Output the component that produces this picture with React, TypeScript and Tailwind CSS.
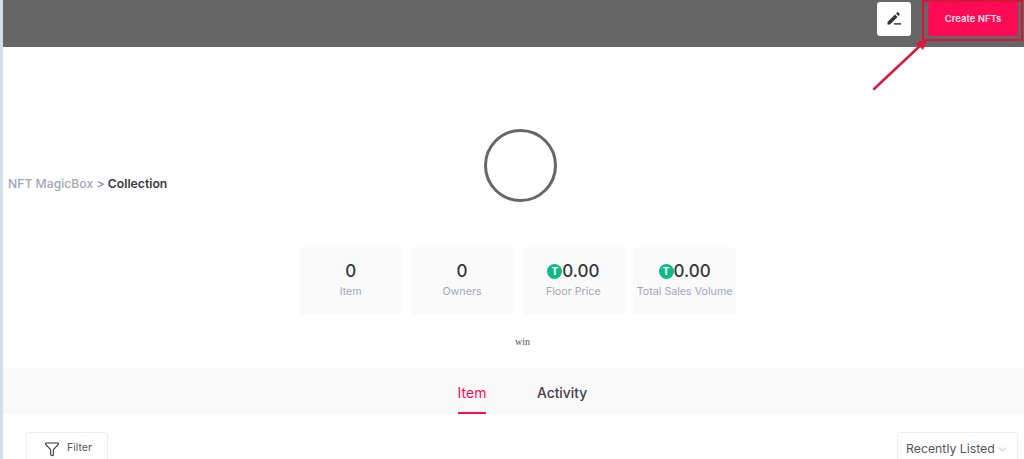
import React from 'react';
import { ChevronDown, Funnel } from 'lucide-react';

const stats = [
  { value: '0', label: 'Item', token: false },
  { value: '0', label: 'Owners', token: false },
  { value: '0.00', label: 'Floor Price', token: true },
  { value: '0.00', label: 'Total Sales Volume', token: true },
];

const TokenIcon = () => (
  <span className="flex h-[15px] w-[15px] items-center justify-center rounded-full bg-[#10b98a] text-[10px] font-bold leading-none text-white">
    T
  </span>
);

const App: React.FC = () => {
  return (
    <div className="relative flex h-[459px] w-[1024px] overflow-hidden bg-white font-['Inter',sans-serif]">
      <div className="w-[3px] shrink-0 bg-[#d5dcea]"></div>

      <div className="flex min-w-0 flex-1 flex-col">
        {/* Header */}
        <header className="flex h-[47px] shrink-0 items-start justify-end gap-[17px] bg-[#666666] pr-[6px] pt-[2px]">
          <button className="flex h-[34px] w-[34px] items-center justify-center rounded-[3px] bg-white">
            <svg width="16" height="16" viewBox="0 0 16 16" fill="#333333">
              <path d="M1.5 11 L9 3.5 L11.5 6 L4 13.5 L1.5 13.5 Z" />
              <path d="M10 2.5 L11 1.5 Q11.8 0.9 12.5 1.5 L13.4 2.4 Q14 3.1 13.4 3.9 L12.5 5 Z" />
              <rect x="8" y="12.2" width="7" height="1.4" />
            </svg>
          </button>
          <button className="flex h-[34px] w-[90px] items-center justify-center rounded-[3px] bg-[#ff0a54] text-[9.5px] font-semibold text-[#ffe3ec]">
            Create NFTs
          </button>
        </header>

        {/* Collection head */}
        <section className="flex pt-[82px]">
          <div className="w-[482px] shrink-0 pl-[5px] pt-[47px] text-[12.2px] font-medium leading-[15px]">
            <span className="text-[#a3a6b4]">NFT MagicBox</span>
            <span className="text-[#8b8e9c]"> &gt; </span>
            <span className="font-semibold text-[#3a3a3f]">Collection</span>
          </div>
          <div className="-ml-[1px] h-[73px] w-[73px] rounded-full border-[3px] border-[#676767] bg-white"></div>
        </section>

        {/* Stats */}
        <section className="ml-[296px] mt-[45px] flex gap-2">
          {stats.map((stat) => (
            <div
              key={stat.label}
              className="flex h-[68px] w-[103.33px] flex-col items-center rounded-[3px] bg-[#fafafa] pt-[14px]"
            >
              <div className="flex items-center text-[17px] font-medium leading-[20px] text-[#36363b]">
                {stat.token && <TokenIcon />}
                <span>{stat.value}</span>
              </div>
              <div className="mt-[4px] whitespace-nowrap text-[10.7px] leading-[14px] text-[#a3a7b5]">{stat.label}</div>
            </div>
          ))}
        </section>

        <div className="ml-[512px] mt-[21px] text-[10px] leading-[12px] text-[#555555] font-['Liberation_Serif',serif]">
          win
        </div>

        {/* Tabs */}
        <nav className="mt-[20px] flex h-[46px] shrink-0 bg-[#f9f9f9] pl-[455px]">
          <div className="flex h-[46px] w-[28px] flex-col items-center border-b-[2px] border-[#ff0a54] pt-[16px] text-[14px] font-normal leading-[18px] text-[#ff0a54]">
            Item
          </div>
          <div className="ml-[51px] pt-[16px] text-[13.8px] font-medium leading-[18px] text-[#3f3f45]">Activity</div>
        </nav>

        {/* Filter row */}
        <div className="flex items-start justify-between pl-[23px] pr-[6px] pt-[18px]">
          <button className="flex h-[31px] w-[82px] items-center rounded-[3px] border border-[#eeeeee] pl-[17px] text-[10.5px] text-[#55555a]">
            <Funnel size={16} strokeWidth={1.6} className="mt-[2px] text-[#333333]" />
            <span className="ml-[7px]">Filter</span>
          </button>
          <button className="flex h-[31px] w-[121px] items-center rounded-[3px] border border-[#eeeeee] pl-[8px] pt-[3px] text-[12.3px] text-[#55555a]">
            <span>Recently Listed</span>
            <ChevronDown size={13} strokeWidth={1.2} className="ml-[1px] text-[#888888]" />
          </button>
        </div>
      </div>

      {/* Red annotation drawn over the screenshot */}
      <div className="absolute left-[922px] top-0 h-[41px] w-[101px] border-[2px] border-[#d3163a]"></div>
      <svg className="absolute left-[870px] top-[36px]" width="62" height="56" viewBox="0 0 62 56" fill="none">
        <path d="M4 53 L52 8" stroke="#e0163c" strokeWidth="2.4" strokeLinecap="round" />
        <path d="M58 2 L46 7 L53 14 Z" fill="#e0163c" />
      </svg>
    </div>
  );
};

export default App;
